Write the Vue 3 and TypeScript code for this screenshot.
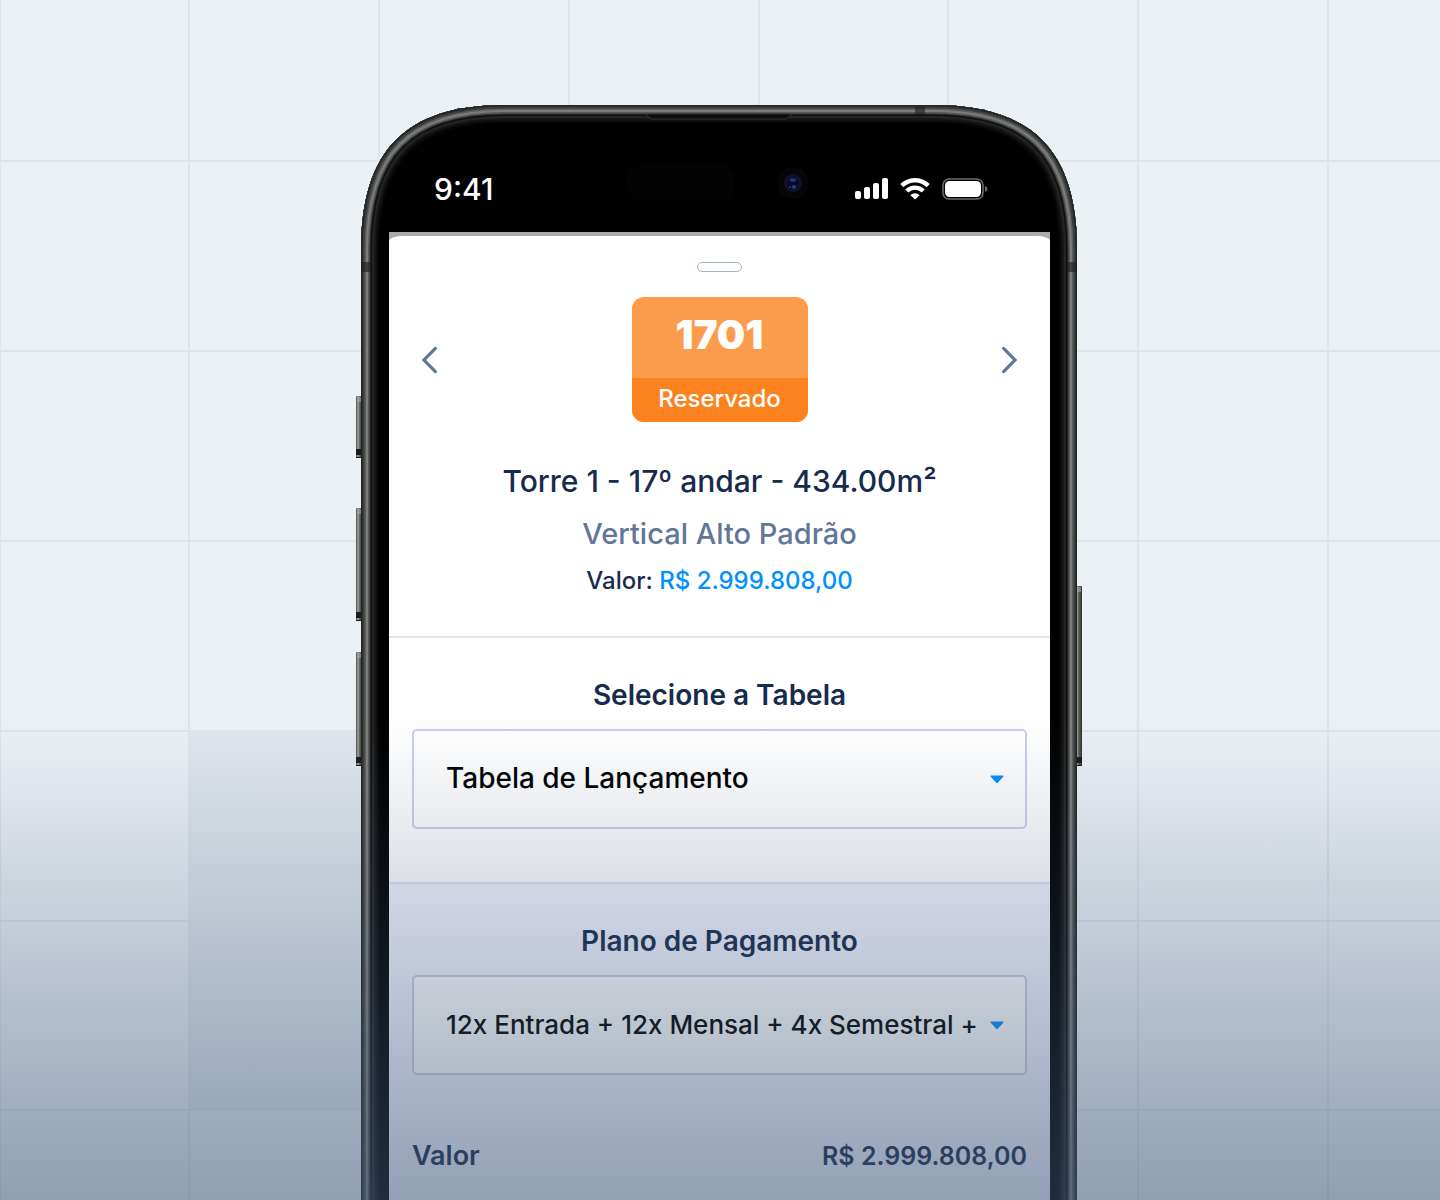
<script setup lang="ts">
import { ref } from 'vue'

interface Layer {
  width: number
  color: string
}

const verticalLines = [-1, 188, 378, 568, 758, 947, 1137, 1327]
const horizontalLines = [160, 350, 540, 730, 920, 1109]

// Strokes are clipped to the body outline, so each one shows half its width.
const bezel: Layer[] = [
  { width: 38, color: '#030303' },
  { width: 35, color: '#080808' },
  { width: 32, color: '#101010' },
  { width: 29, color: '#181818' },
  { width: 26, color: '#242424' },
  { width: 22, color: '#0e0f10' },
  { width: 19, color: '#2e2f30' },
  { width: 17, color: '#595a59' },
  { width: 14, color: '#7d7c79' },
  { width: 10, color: '#5e5f5e' },
  { width: 7, color: '#3a3d3d' },
  { width: 3, color: '#222627' },
]

const bodyPath =
  'M5 1800 V145 C5 45 50 0 149 0 H577 C676 0 721 45 721 145 V1800 Z'

const sideButtons = [
  { x: 0, y: 291, height: 62 },
  { x: 0, y: 403, height: 113 },
  { x: 0, y: 547, height: 114 },
  { x: 719, y: 481, height: 180 },
]

const priceTable = ref('lancamento')
const paymentPlan = ref('plano-12-12-4')
</script>

<template>
  <main class="stage">
    <svg class="grid" aria-hidden="true">
      <rect class="shade" x="190" y="731" width="189" height="379" />
      <rect v-for="x in verticalLines" :key="'v' + x" :x="x" y="0" width="2" height="100%" />
      <rect v-for="y in horizontalLines" :key="'h' + y" x="0" :y="y" width="100%" height="2" />
    </svg>

    <div class="phone">
      <svg class="frame" viewBox="0 0 726 1800" aria-hidden="true">
        <defs>
          <clipPath id="body-clip"><path :d="bodyPath" /></clipPath>
          <linearGradient id="button-metal" x1="0" x2="1" y1="0" y2="0">
            <stop offset="0" stop-color="#4c4b48" />
            <stop offset=".3" stop-color="#a5a39c" />
            <stop offset=".55" stop-color="#5b5a56" />
            <stop offset="1" stop-color="#33342f" />
          </linearGradient>
        </defs>
        <g v-for="b in sideButtons" :key="b.x + '-' + b.y">
          <rect :x="b.x" :y="b.y" width="7" :height="b.height" rx="1" fill="url(#button-metal)" />
          <rect :x="b.x + 1" :y="b.y + 1" width="5" height="5" fill="#aaa9a4" opacity=".6" />
          <rect :x="b.x" :y="b.y + b.height - 9" width="7" height="6" fill="#1b1b1a" />
          <rect :x="b.x" :y="b.y + b.height - 1" width="7" height="1" fill="#1b1b1a" />
        </g>
        <path :d="bodyPath" fill="#000" />
        <g clip-path="url(#body-clip)" fill="none">
          <path v-for="l in bezel" :key="l.width" :d="bodyPath" :stroke="l.color" :stroke-width="l.width" />
          <g fill="#1e2022" opacity=".65">
            <rect x="559" y="1" width="10" height="8" />
            <rect x="5" y="157" width="9" height="10" />
            <rect x="712" y="157" width="9" height="10" />
          </g>
        </g>
        <path d="M290 9 H436 L432 13 Q431 14 429 14 H297 Q295 14 294 13 Z" fill="#0c0c0c" stroke="#333" />
        <rect x="270" y="60" width="109" height="36" rx="18" fill="#030303" />
        <circle cx="437" cy="78" r="16" fill="#07040a" />
        <circle cx="437" cy="78" r="9" fill="#12112e" />
        <circle cx="437" cy="78" r="6" fill="#0b0a26" />
        <ellipse cx="437" cy="75" rx="3" ry="2" fill="#2f2d78" />
        <circle cx="438" cy="82" r="2" fill="#154a72" />
        <circle cx="434" cy="82" r="1" fill="#4a2a80" />
      </svg>

      <header class="status">
        <time class="clock">9:41</time>
        <div class="signals">
          <svg width="34" height="22" viewBox="0 0 34 22" fill="#fff" role="img" aria-label="Sinal">
            <rect x="1" y="13" width="6" height="8" rx="2" />
            <rect x="10" y="9" width="6" height="12" rx="2" />
            <rect x="19" y="5" width="6" height="16" rx="2" />
            <rect x="28" y="0" width="6" height="21" rx="2" />
          </svg>
          <svg width="30" height="22" viewBox="0 0 30 22" role="img" aria-label="Wi-Fi">
            <g fill="none" stroke="#fff" stroke-width="4.4">
              <path d="M1.8 7.6 A18.8 18.8 0 0 1 28.2 7.6" />
              <path d="M6.8 13 A11.6 11.6 0 0 1 23.2 13" />
            </g>
            <path d="M15 21.4 L10.4 17.2 A6.6 6.6 0 0 1 19.6 17.2 Z" fill="#fff" />
          </svg>
          <svg width="46" height="22" viewBox="0 0 46 22" role="img" aria-label="Bateria">
            <rect x="1" y="1" width="40" height="20" rx="6" fill="none" stroke="#6b6b6b" stroke-width="1.6" />
            <rect x="3" y="3" width="36" height="16" rx="4.5" fill="#fff" />
            <path d="M43 8 Q45.6 9 45.6 11 Q45.6 13 43 14 Z" fill="#6b6b6b" />
          </svg>
        </div>
      </header>

      <div class="screen">
        <div class="sheet">
          <section class="unit">
            <div class="handle"></div>
            <div class="pager">
              <button type="button" aria-label="Unidade anterior">
                <svg width="18" height="28" viewBox="0 0 18 28"><path d="M15.4 2.4 L4 14 L15.4 25.6" /></svg>
              </button>
              <div class="badge">
                <strong>1701</strong>
                <span>Reservado</span>
              </div>
              <button type="button" aria-label="Próxima unidade">
                <svg width="18" height="28" viewBox="0 0 18 28"><path d="M2.6 2.4 L14 14 L2.6 25.6" /></svg>
              </button>
            </div>
            <h1>Torre 1 - 17º andar - 434.00m²</h1>
            <p class="kind">Vertical Alto Padrão</p>
            <p class="price">Valor: <span>R$ 2.999.808,00</span></p>
          </section>

          <section class="group">
            <label for="price-table">Selecione a Tabela</label>
            <div class="field">
              <select id="price-table" v-model="priceTable">
                <option value="lancamento">Tabela de Lançamento</option>
              </select>
              <svg class="caret" width="14" height="9" viewBox="0 0 14 9" aria-hidden="true">
                <path d="M1 0.6 H13 Q14 0.8 13.2 1.8 L8 7.4 Q7 8.4 6 7.4 L0.8 1.8 Q0 0.8 1 0.6 Z" />
              </svg>
            </div>
          </section>

          <section class="group plan">
            <label for="payment-plan">Plano de Pagamento</label>
            <div class="field">
              <select id="payment-plan" v-model="paymentPlan" class="dense">
                <option value="plano-12-12-4">12x Entrada + 12x Mensal + 4x Semestral +</option>
              </select>
              <svg class="caret" width="14" height="9" viewBox="0 0 14 9" aria-hidden="true">
                <path d="M1 0.6 H13 Q14 0.8 13.2 1.8 L8 7.4 Q7 8.4 6 7.4 L0.8 1.8 Q0 0.8 1 0.6 Z" />
              </svg>
            </div>
            <dl class="total">
              <dt>Valor</dt>
              <dd>R$ 2.999.808,00</dd>
            </dl>
          </section>
        </div>
      </div>
    </div>

    <div class="fade"></div>
  </main>
</template>

<style>
body {
  margin: 0;
}
</style>

<style scoped>
.stage {
  position: relative;
  box-sizing: border-box;
  display: flex;
  justify-content: center;
  min-height: 100vh;
  padding: 105px 2px 0 0;
  overflow: hidden;
  background: #ecf1f6;
  font-family: Inter, "Liberation Sans", sans-serif;
  color: #172b4d;
}

.grid {
  position: absolute;
  inset: 0;
  width: 100%;
  height: 100%;
  fill: #dfe4ec;
  opacity: 0.9;
}

.grid .shade {
  fill: #e0e7ed;
}

.phone {
  position: relative;
  box-sizing: border-box;
  display: flex;
  flex-direction: column;
  width: 100%;
  max-width: 726px;
  padding: 0 32px 0 33px;
}

.frame {
  position: absolute;
  top: 0;
  left: 0;
  width: 100%;
}

.status {
  position: relative;
  display: flex;
  align-items: center;
  justify-content: space-between;
  height: 87px;
  padding: 40px 62px 0 45px;
}

.clock {
  font-size: 30px;
  line-height: 36px;
  font-weight: 500;
  color: #fff;
}

.signals {
  display: flex;
  gap: 12px;
}

.signals svg {
  display: block;
}

.screen {
  position: relative;
  display: flex;
  flex: 1;
  padding-top: 4px;
  background: #ababab;
}

.sheet {
  display: flex;
  flex: 1;
  flex-direction: column;
  min-width: 0;
  overflow: hidden;
  border-radius: 14px 14px 0 0 / 5px 5px 0 0;
  background: #fff;
}

.unit {
  display: flex;
  flex-direction: column;
  align-items: center;
  padding: 26px 31px 37px;
  border-bottom: 2px solid #e6e6e8;
  text-align: center;
}

.handle {
  box-sizing: border-box;
  width: 45px;
  height: 10px;
  border: 1px solid #a3b3cc;
  border-radius: 5px;
}

.pager {
  display: flex;
  align-items: center;
  justify-content: space-between;
  align-self: stretch;
  margin-top: 25px;
}

.pager button {
  padding: 0;
  border: 0;
  background: none;
  cursor: pointer;
}

.pager svg {
  display: block;
  fill: none;
  stroke: #5f7799;
  stroke-width: 3.2;
  stroke-linecap: round;
}

.badge {
  width: 176px;
  overflow: hidden;
  border-radius: 12px;
  background: #fc9b4c;
  color: #fff;
}

.badge strong {
  display: block;
  padding: 16px 0 21px;
  font-size: 40px;
  line-height: 44px;
  font-weight: 900;
}

.badge span {
  display: block;
  padding: 1px 0 3px;
  background: #fc8220;
  font-size: 24px;
  line-height: 40px;
  font-weight: 500;
}

h1,
p {
  margin: 0;
}

h1 {
  margin-top: 39px;
  font-size: 30px;
  line-height: 40px;
  font-weight: 500;
}

.kind {
  margin-top: 13px;
  font-size: 29px;
  line-height: 40px;
  font-weight: 500;
  color: #62769a;
}

.price {
  margin-top: 9px;
  font-size: 24px;
  line-height: 36px;
  font-weight: 500;
}

.price span {
  color: #0090ff;
}

.group {
  padding: 39px 23px 53px;
}

.group label {
  display: block;
  margin-bottom: 16px;
  font-size: 28px;
  line-height: 36px;
  font-weight: 600;
  text-align: center;
}

.plan {
  flex: 1;
  border-top: 2px solid #e2e2f3;
  background: #f3f4ff;
}

.field {
  position: relative;
}

select {
  box-sizing: border-box;
  display: block;
  width: 100%;
  height: 100px;
  margin: 0;
  padding: 0 38px 2px 32px;
  appearance: none;
  border: 2px solid #cdcdee;
  border-radius: 5px;
  background: #fff;
  color: #000;
  font-family: inherit;
  font-size: 28px;
  font-weight: 500;
}

select.dense {
  font-size: 26px;
}

.caret {
  position: absolute;
  top: 46px;
  right: 23px;
  fill: #0090ff;
  pointer-events: none;
}

.total {
  display: flex;
  align-items: center;
  justify-content: space-between;
  margin: 63px 0 0;
  font-size: 25px;
  line-height: 36px;
  font-weight: 600;
}

.total dt {
  font-size: 27px;
}

.total dd {
  margin: 0;
}

.fade {
  position: absolute;
  right: 0;
  bottom: 0;
  left: 0;
  height: 510px;
  background: linear-gradient(rgba(62, 85, 115, 0), rgba(62, 85, 115, 0.56));
  pointer-events: none;
}
</style>
